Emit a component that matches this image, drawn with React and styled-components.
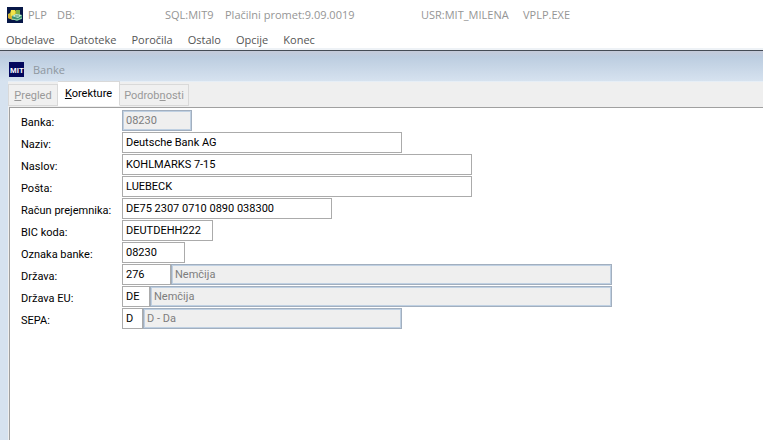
import React from "react";
import styled, { createGlobalStyle } from "styled-components";

const GlobalStyle = createGlobalStyle`
  * {
    box-sizing: border-box;
  }
  body {
    margin: 0;
    background: #fff;
  }
`;

const uiFont = `"Open Sans", "Noto Sans", sans-serif`;
const formFont = `Roboto, "Liberation Sans", sans-serif`;

const Window = styled.div`
  display: flex;
  flex-direction: column;
  min-height: 100vh;
  font-family: ${uiFont};
  font-size: 11px;
  background: #fff;
`;

const TitleBar = styled.header`
  display: flex;
  align-items: center;
  height: 29px;
  padding-left: 7px;
  color: #959595;
  white-space: pre;
`;

const TitlePart = styled.span`
  flex: 0 0 ${(props) => props.$width}px;
`;

const AppIcon = styled.svg`
  flex: none;
  width: 16px;
  height: 16px;
  margin-right: 5px;
`;

const MenuBar = styled.nav`
  display: flex;
  align-items: center;
  gap: 15px;
  height: 21px;
  padding: 2px 0 0 6px;
  border-bottom: 2px solid #eef2f6;
`;

const MenuButton = styled.button`
  padding: 0;
  border: 0;
  background: none;
  color: #555;
  font: 11px ${uiFont};
`;

const ChildWindow = styled.main`
  display: flex;
  flex: 1;
  flex-direction: column;
  padding-left: 8px;
  border-top: 1px solid #444b55;
  background: linear-gradient(#c4cad9, #bccde0 6px, #d6e2ef 30px);
`;

const ChildTitle = styled.div`
  display: flex;
  align-items: center;
  gap: 9px;
  height: 30px;
  padding: 6px 0 0 1px;
  color: #8e979f;
`;

const MitIcon = styled.svg`
  width: 15px;
  height: 15px;
`;

const TabStrip = styled.div`
  display: flex;
  align-items: flex-end;
  height: 26px;
  padding-bottom: 1px;
  border-top: 1px solid #e6eef6;
  background: #efefef;
`;

const Tab = styled.button`
  width: ${(props) => props.$width}px;
  height: ${(props) => (props.$active ? 25 : 22)}px;
  padding: 0;
  border: 1px solid #d9d9d9;
  border-left-width: ${(props) => (props.$first ? 1 : 0)}px;
  border-bottom-color: ${(props) => (props.$active ? "#fff" : "#d9d9d9")};
  background: ${(props) => (props.$active ? "#fff" : "#f0f0f0")};
  color: ${(props) => (props.$active ? "#000" : "#999")};
  font: 11px ${formFont};
`;

const Body = styled.div`
  display: flex;
  flex: 1;
  padding-left: 1px;
  background: #efefef;
`;

const Panel = styled.form`
  flex: 1;
  padding: 2px 11px;
  border: solid #a0a0a0;
  border-width: 1px 0 0 1px;
  background: #fff;
  font-family: ${formFont};
`;

const Row = styled.div`
  display: grid;
  grid-template-columns: 101px 1fr;
  height: 22px;
`;

const Label = styled.label`
  padding-top: 2px;
  color: #000;
  font-size: 11px;
  line-height: 21px;
  white-space: nowrap;
`;

const Fields = styled.div`
  display: flex;
`;

const Field = styled.input`
  width: ${(props) => props.$width}px;
  height: 21px;
  padding: 0 3px 1px;
  border: 1px solid #ababab;
  border-radius: 0;
  outline: 0;
  background: #fff;
  color: #000;
  font: 11px ${formFont};

  &:disabled {
    border-color: #a2afbf;
    box-shadow: inset 0 0 0 1px #bfd0e2;
    background: #efefef;
    color: #7d7d7d;
  }
`;

const menu = ["Obdelave", "Datoteke", "Poročila", "Ostalo", "Opcije", "Konec"];

const rows = [
  { id: "banka", label: "Banka:", value: "08230", width: 70, disabled: true },
  { id: "naziv", label: "Naziv:", value: "Deutsche Bank AG", width: 280 },
  { id: "naslov", label: "Naslov:", value: "KOHLMARKS 7-15", width: 350 },
  { id: "posta", label: "Pošta:", value: "LUEBECK", width: 350 },
  { id: "racun", label: "Račun prejemnika:", value: "DE75 2307 0710 0890 038300", width: 210 },
  { id: "bic", label: "BIC koda:", value: "DEUTDEHH222", width: 91 },
  { id: "oznaka", label: "Oznaka banke:", value: "08230", width: 63 },
  { id: "drzava", label: "Država:", value: "276", width: 49, text: "Nemčija", textWidth: 441 },
  { id: "drzavaeu", label: "Država EU:", value: "DE", width: 28, text: "Nemčija", textWidth: 462 },
  { id: "sepa", label: "SEPA:", value: "D", width: 21, text: "D - Da", textWidth: 259 },
];

const App = () => {
  return (
    <Window>
      <GlobalStyle />
      <TitleBar>
        <AppIcon viewBox="0 0 16 16" aria-hidden="true">
          <rect width="16" height="16" fill="#071747" />
          <path d="M1 7l2-1 1-3h4l1 1h4v4l-2 3-5 2-5-2z" fill="#c9bd2f" />
          <path d="M4 3h4v5l-4 1z" fill="#f2e44a" />
          <path d="M9 3h4v4l-4 1z" fill="#7fb24a" />
          <path d="M1 8l5 2v3l-5-2z" fill="#d9ae35" />
          <path d="M5 9l4-2 6 1v4l-5 2-5-2z" fill="#3c9273" />
          <path d="M5 9l4-2 6 1-4 3z" fill="#c4ead0" />
          <path d="M5 12l5 1 5-2" stroke="#9bd6b0" fill="none" />
          <path d="M8 9h4" stroke="#438e70" />
        </AppIcon>
        <TitlePart $width={29}>PLP</TitlePart>
        <TitlePart $width={108}>DB:</TitlePart>
        <TitlePart $width={60}>SQL:MIT9</TitlePart>
        <TitlePart $width={196}>Plačilni promet:9.09.0019</TitlePart>
        <TitlePart $width={102}>USR:MIT_MILENA</TitlePart>
        <span>VPLP.EXE</span>
      </TitleBar>
      <MenuBar>
        {menu.map((item) => (
          <MenuButton key={item} type="button">{item}</MenuButton>
        ))}
      </MenuBar>
      <ChildWindow>
        <ChildTitle>
          <MitIcon viewBox="0 0 15 15" aria-hidden="true">
            <rect width="15" height="15" fill="#03075c" />
            <text x="1" y="11" fill="#fff" fontFamily="Liberation Sans, sans-serif" fontSize="8" fontWeight="bold">MIT</text>
          </MitIcon>
          <span>Banke</span>
        </ChildTitle>
        <TabStrip role="tablist">
          <Tab type="button" role="tab" $width={50} $first><u>P</u>regled</Tab>
          <Tab type="button" role="tab" aria-selected="true" $width={62} $active><u>K</u>orekture</Tab>
          <Tab type="button" role="tab" $width={69}>Podrob<u>n</u>osti</Tab>
        </TabStrip>
        <Body>
          <Panel>
            {rows.map((row) => (
              <Row key={row.id}>
                <Label htmlFor={row.id}>{row.label}</Label>
                <Fields>
                  <Field id={row.id} defaultValue={row.value} $width={row.width} disabled={row.disabled} />
                  {row.text && (
                    <Field aria-label={row.label} defaultValue={row.text} $width={row.textWidth} disabled />
                  )}
                </Fields>
              </Row>
            ))}
          </Panel>
        </Body>
      </ChildWindow>
    </Window>
  );
};

export default App;
